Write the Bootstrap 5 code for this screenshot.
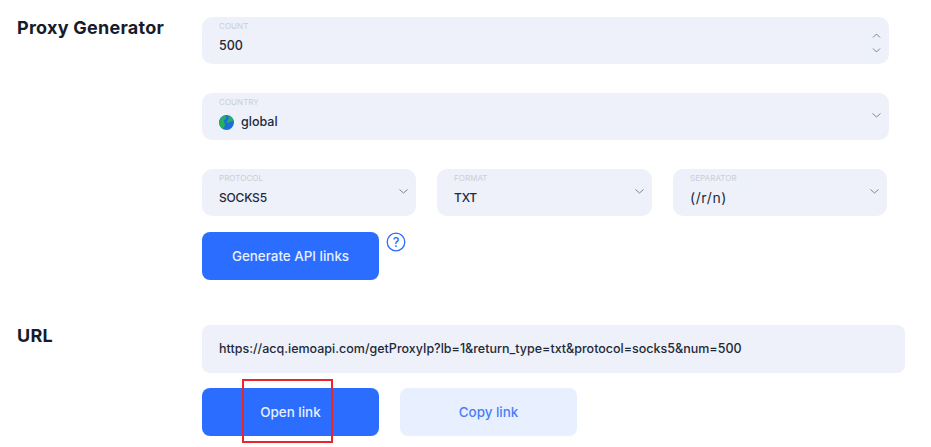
<!DOCTYPE html>
<html lang="en"><head><meta charset="utf-8"><title>Proxy Generator</title>
<link href="https://cdn.jsdelivr.net/npm/bootstrap@5.3.0/dist/css/bootstrap.min.css" rel="stylesheet">
<style>
html,body{height:447px;overflow:hidden;background:#fff}
body{font-family:Inter,"Liberation Sans",sans-serif;color:#1d2333}
.pg-wrap{padding:17px 26px 0 17px;position:relative;height:447px}
.pg-label{width:185px;flex:none;font-size:18px;font-weight:700;color:#161c2d;line-height:22px;letter-spacing:.25px}
.pg-fields{width:687px;flex:none}
.pg-box{background:#eef1f9;border-radius:10px;height:47px;padding:0 17px;position:relative}
.pg-cap{display:block;font-size:8px;line-height:10px;color:#cbced6;padding-top:4px;letter-spacing:.05px}
.pg-val{display:flex;align-items:center;gap:7px;font-size:12.5px;font-weight:500;line-height:16px;margin-top:7px;color:#22293a}
.pg-tight{font-size:12px;letter-spacing:-.2px}
.pg-sep{font-size:14px;letter-spacing:.6px;font-weight:400}
.pg-chev{position:absolute;right:7px;top:19px;width:11px;height:7px}
.pg-chev2{top:30px}
.pg-up{top:15px}
.pg-mt{margin-top:29px}
.pg-third{width:215px;flex:none}
.pg-third-s{width:214px;flex:none}
.pg-gap{gap:21px}
.pg-btn{width:177px;height:48px;border-radius:8px;font-size:13.4px;font-weight:500;display:flex;align-items:center;justify-content:center;border:0;padding:0}
.pg-btn.btn-primary{background:#2a6dff;color:#e8f0ff}
.pg-btn.btn-light{background:#e8effe;color:#4a7dfb;margin-left:21px}
.pg-help{width:20px;height:20px;margin:0 0 0 7px;flex:none}
.pg-url{width:703px;height:48px;background:#eef1f9;border-radius:8px;padding:1px 17px 0;display:flex;align-items:center;font-size:12.5px;font-weight:500;color:#22293a;white-space:nowrap}
.pg-red{position:absolute;left:242px;top:379px;width:91px;height:64px;border:2px solid #e8262c;pointer-events:none}
.pg-url-row{margin-top:45px}
.pg-gen{margin-top:16px}
.pg-links{margin-top:15px}
</style></head>
<body>
<div class="pg-wrap">
  <div class="d-flex">
    <div class="pg-label">Proxy Generator</div>
    <div class="pg-fields">
      <div class="pg-box"><span class="pg-cap">COUNT</span><div class="pg-val">500</div>
        <svg class="pg-chev pg-up" viewBox="0 0 11 7" fill="none" stroke="#7485a8"><path d="M2 5.500 5.500 2 9 5.500"/></svg>
        <svg class="pg-chev pg-chev2" viewBox="0 0 11 7" fill="none" stroke="#7485a8"><path d="M2 1.500 5.500 5 9 1.500"/></svg>
      </div>
      <div class="pg-box pg-mt"><span class="pg-cap">COUNTRY</span>
        <div class="pg-val"><svg width="15" height="15" viewBox="0 0 15 15"><circle cx="7.500" cy="7.500" r="7.500" fill="#1c6fd8"/><path d="M.2 8.500C.5 4 3 1 6 .2 8 2 7 4 5 5 5 7 6 9 6 10.500 5 12.500 4.500 13.500 3.500 13.800 1.500 12.500.4 10.500.2 8.500ZM9 .5C11.500 1.200 13.500 3 14.500 5.500 12.500 7 11 6 10 7.500 8.500 8.500 7.500 7.500 8 6 9.500 5 10.500 3 9 .5Z" fill="#27b05a"/></svg>global</div>
        <svg class="pg-chev" viewBox="0 0 11 7" fill="none" stroke="#7485a8"><path d="M1.500 1.500 5.500 5 9.500 1.500"/></svg>
      </div>
      <div class="d-flex pg-gap pg-mt">
        <div class="pg-box pg-third-s"><span class="pg-cap">PROTOCOL</span><div class="pg-val pg-tight">SOCKS5</div>
          <svg class="pg-chev" viewBox="0 0 11 7" fill="none" stroke="#7a8499"><path d="M1.500 1.500 5.500 5 9.500 1.500"/></svg></div>
        <div class="pg-box pg-third"><span class="pg-cap">FORMAT</span><div class="pg-val pg-tight">TXT</div>
          <svg class="pg-chev" viewBox="0 0 11 7" fill="none" stroke="#7a8499"><path d="M1.500 1.500 5.500 5 9.500 1.500"/></svg></div>
        <div class="pg-box pg-third-s"><span class="pg-cap">SEPARATOR</span><div class="pg-val pg-sep">(/r/n)</div>
          <svg class="pg-chev" viewBox="0 0 11 7" fill="none" stroke="#7a8499"><path d="M1.500 1.500 5.500 5 9.500 1.500"/></svg></div>
      </div>
      <div class="d-flex pg-gen align-items-start">
        <button class="btn btn-primary pg-btn" type="button">Generate API links</button>
        <svg class="pg-help" viewBox="0 0 20 20" fill="none"><circle cx="10" cy="10" r="8.800" stroke="#2a6dff" stroke-width="1.300"/><text x="10" y="14.500" text-anchor="middle" font-family="Inter,sans-serif" font-size="12.500" font-weight="500" fill="#2a6dff">?</text></svg>
      </div>
    </div>
  </div>
  <div class="d-flex pg-url-row">
    <div class="pg-label">URL</div>
    <div>
      <div class="pg-url">https://acq.iemoapi.com/getProxyIp?lb=1&amp;return_type=txt&amp;protocol=socks5&amp;num=500</div>
      <div class="d-flex pg-links">
        <button class="btn btn-primary pg-btn" type="button">Open link</button>
        <button class="btn btn-light pg-btn" type="button">Copy link</button>
      </div>
    </div>
  </div>
  <div class="pg-red"></div>
</div>
<script src="https://cdn.jsdelivr.net/npm/bootstrap@5.3.0/dist/js/bootstrap.bundle.min.js"></script>
</body></html>
